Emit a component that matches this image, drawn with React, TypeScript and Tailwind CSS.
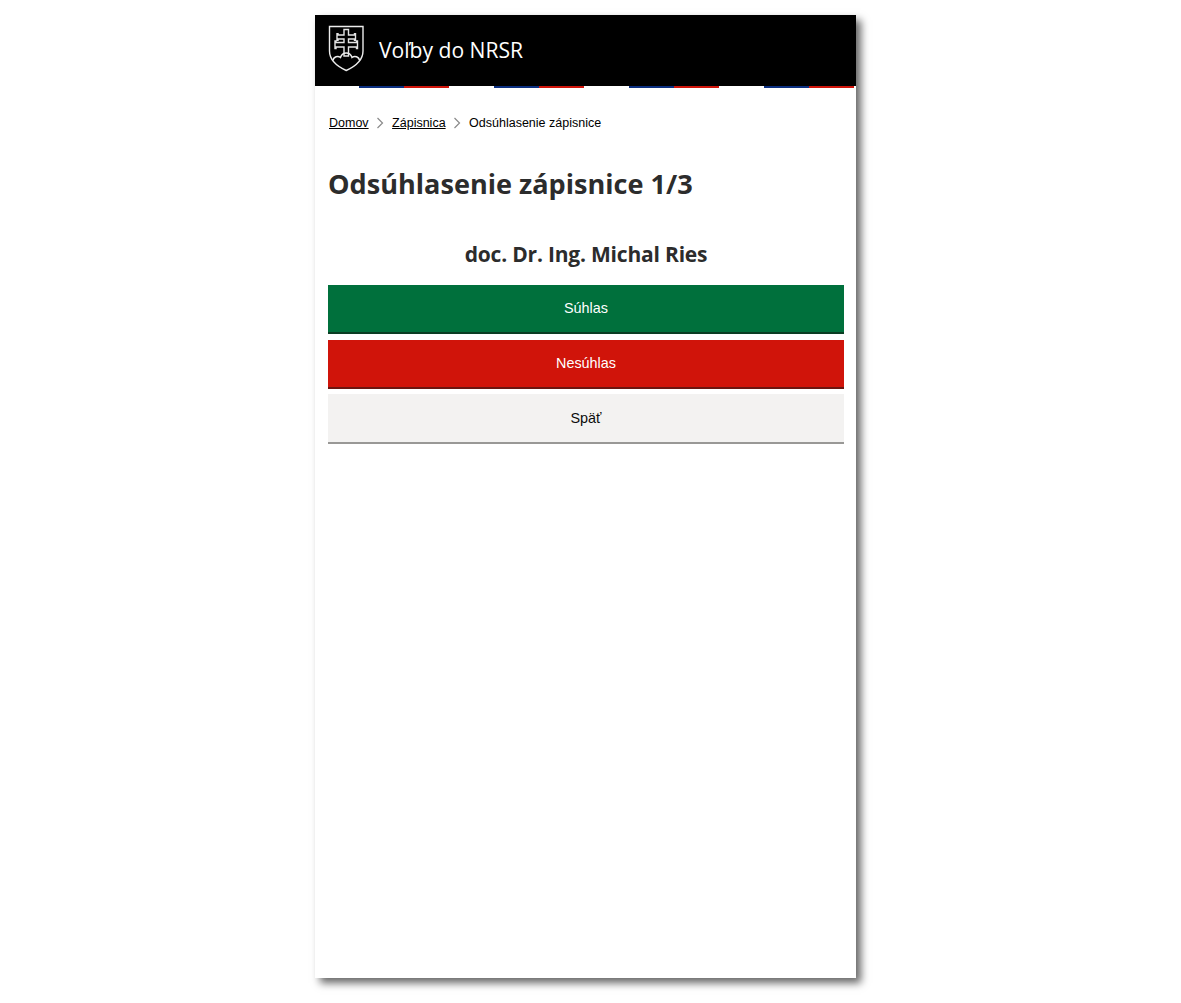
import React from 'react'

const Crest = () => (
  <svg width="38" height="47" viewBox="0 0 38 47" fill="none" className="shrink-0">
    <path
      d="M1.5 1.5H35V26C35 35.5 27 41.5 18.25 45.5C9.5 41.5 1.5 35.5 1.5 26Z"
      stroke="#ececec"
      strokeWidth="1.4"
    />
    <path
      d="M16 4.5H20.5V10H26.5V8.8H27.5V15.2H26.5V14H20.5V17.5H28.5V16H29.5V23.5H28.5V22H20.5V31H16V22H8V23.5H7V16H8V17.5H16V14H10V15.2H9V8.8H10V10H16Z"
      stroke="#e4e4e4"
      strokeWidth="1.4"
    />
    <path
      d="M5 35.5C5.5 31.5 10 30.5 12.5 32.5C13.5 29.5 15.8 28 18.25 28C20.7 28 23 29.5 24 32.5C26.5 30.5 31 31.5 31.5 35.5"
      stroke="#ececec"
      strokeWidth="1.4"
    />
  </svg>
)

const Chevron = () => (
  <svg width="8" height="12" viewBox="0 0 8 12" fill="none" className="ml-[7.5px] mr-2 shrink-0">
    <path d="M1.5 1L6.5 6L1.5 11" stroke="#8a8a8a" strokeWidth="1.2" />
  </svg>
)

const stripes = [0, 1, 2, 3]

export default function App() {
  return (
    <div className="h-[1003px] bg-white pt-[15px] pl-[315px] overflow-hidden">
      <div className="w-[541px] h-[963px] bg-white flex flex-col shadow-[5px_5px_8px_rgba(0,0,0,0.6)]">
        <header className="h-[71px] bg-black flex items-start pl-[13px] pt-[10px] gap-[13px]">
          <Crest />
          <span className="text-[21.1px] leading-[30px] text-white mt-[10px] font-['Open_Sans',sans-serif]">
            Voľby do NRSR
          </span>
        </header>
        <div className="flex h-[2px] pl-[44px] gap-[45px]">
          {stripes.map((i) => (
            <div key={i} className="flex w-[90px]">
              <div className="w-[45px] bg-[#0b2f80]" />
              <div className="w-[45px] bg-[#d0140a]" />
            </div>
          ))}
        </div>
        <main className="px-[13px] font-['Liberation_Sans',sans-serif]">
          <nav className="flex items-center mt-[27px] ml-px text-[12.5px] leading-[16px] text-black">
            <a href="#" className="underline">Domov</a>
            <Chevron />
            <a href="#" className="underline">Zápisnica</a>
            <Chevron />
            <span>Odsúhlasenie zápisnice</span>
          </nav>
          <h1 className="mt-[33px] text-[27.1px] leading-[40px] font-bold text-[#2c2c2c] font-['Open_Sans',sans-serif]">
            Odsúhlasenie zápisnice 1/3
          </h1>
          <h2 className="mt-[35px] text-[21px] leading-[30px] tracking-[-0.2px] font-bold text-center text-[#2c2c2c] font-['Open_Sans',sans-serif] w-[516px]">
            doc. Dr. Ing. Michal Ries
          </h2>
          <div className="flex flex-col w-[516px] mt-[16px] gap-[6px] text-[14.4px]">
            <button className="h-[49px] bg-[#00703c] text-white border-b-2 border-[#0b3d23]">Súhlas</button>
            <button className="h-[49px] bg-[#d0140a] text-white border-b-2 border-[#6b1510]">Nesúhlas</button>
            <button className="h-[50px] -mt-px pt-[2px] bg-[#f3f2f1] text-[#0b0c0c] border-b-2 border-[#999896]">Späť</button>
          </div>
        </main>
      </div>
    </div>
  )
}
